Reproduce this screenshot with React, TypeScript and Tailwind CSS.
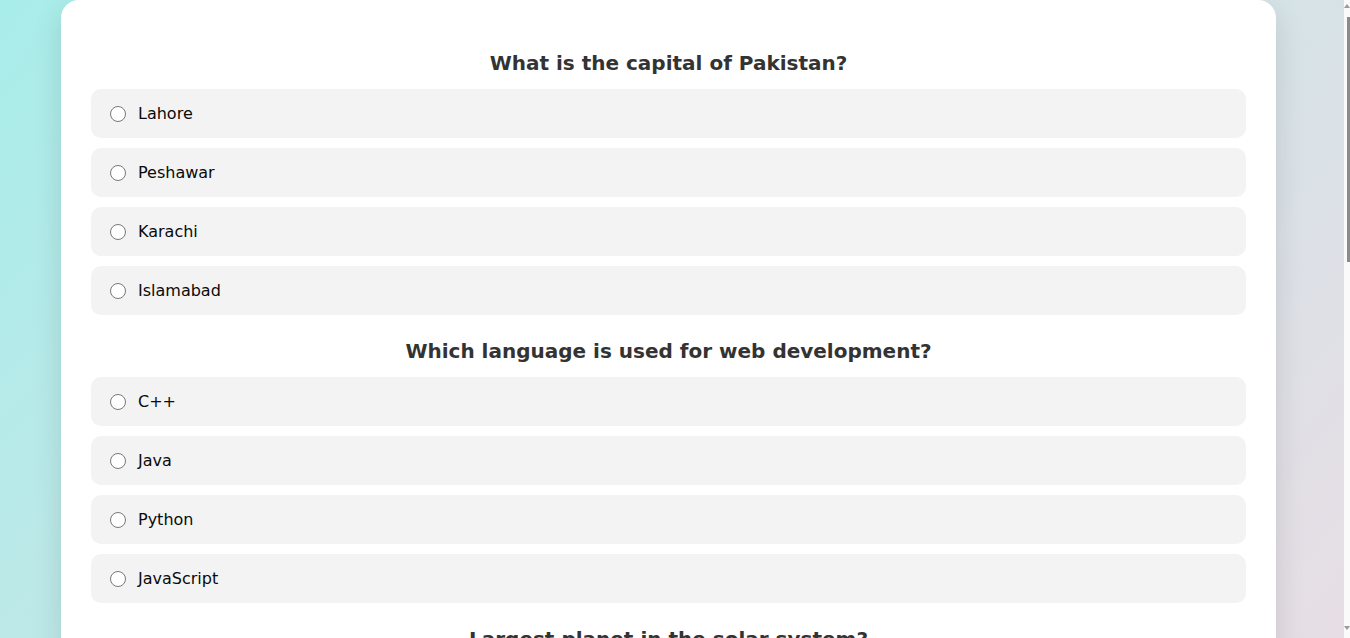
import React from "react";

const questions = [
  { q: "What is the capital of Pakistan?", options: ["Lahore", "Peshawar", "Karachi", "Islamabad"] },
  { q: "Which language is used for web development?", options: ["C++", "Java", "Python", "JavaScript"] },
  { q: "Largest planet in the solar system?", options: ["Earth", "Mars", "Jupiter", "Saturn"] },
  { q: "Who wrote the national anthem of Pakistan?", options: ["Allama Iqbal", "Hafeez Jalandhari", "Faiz Ahmed Faiz", "Ahmed Faraz"] },
  { q: "What does HTML stand for?", options: ["Hyper Text Markup Language", "High Text Machine Language", "Hyperlink Text Mode Language", "Home Tool Markup Language"] },
];

export default function App() {
  return (
    <div className="flex h-screen w-full overflow-hidden" style={{ fontFamily: '"DejaVu Sans", sans-serif' }}>
      <div className="h-full w-[1344px] shrink-0 overflow-hidden">
        <div className="bg-linear-to-br from-[#a8edea] to-[#fed6e3] pb-[40px]">
          <div className="ml-[61px] w-[1215px] rounded-[18px] bg-white px-[30px] pt-[47px] pb-[30px] shadow-[0_10px_30px_rgba(0,0,0,0.12)]">
            {questions.map((item, qi) => (
              <div key={qi} className="mb-[20px]">
                <h2 className="mb-[10px] text-center text-[20px] leading-[32px] font-bold text-[#333]">{item.q}</h2>
                <div className="flex flex-col gap-[10px]">
                  {item.options.map((o) => (
                    <label
                      key={o}
                      className="flex h-[49px] cursor-pointer items-center gap-[12px] rounded-[10px] bg-[#f3f3f3] pl-[19px] text-[16px] text-[#0a0a0a]"
                    >
                      <span className="h-[16px] w-[16px] shrink-0 rounded-full border-[1.5px] border-[#777] bg-white" />
                      <span>{o}</span>
                    </label>
                  ))}
                </div>
              </div>
            ))}
            <button className="mt-[10px] h-[50px] w-full rounded-[10px] bg-[#4facfe] text-[18px] font-bold text-white">
              Submit
            </button>
          </div>
        </div>
      </div>
      <div className="flex h-full flex-1 flex-col items-end bg-[#fafafa]">
        <div className="mt-[4px] h-0 w-0 border-r-[3px] border-b-[4px] border-l-[3px] border-r-transparent border-b-[#9a9a9a] border-l-transparent" />
        <div className="mt-[9px] h-[245px] w-[3px] bg-[#8b8b8b]" />
        <div className="flex-1" />
        <div className="mb-[8px] h-0 w-0 border-t-[4px] border-r-[3px] border-l-[3px] border-t-[#9a9a9a] border-r-transparent border-l-transparent" />
      </div>
    </div>
  );
}
